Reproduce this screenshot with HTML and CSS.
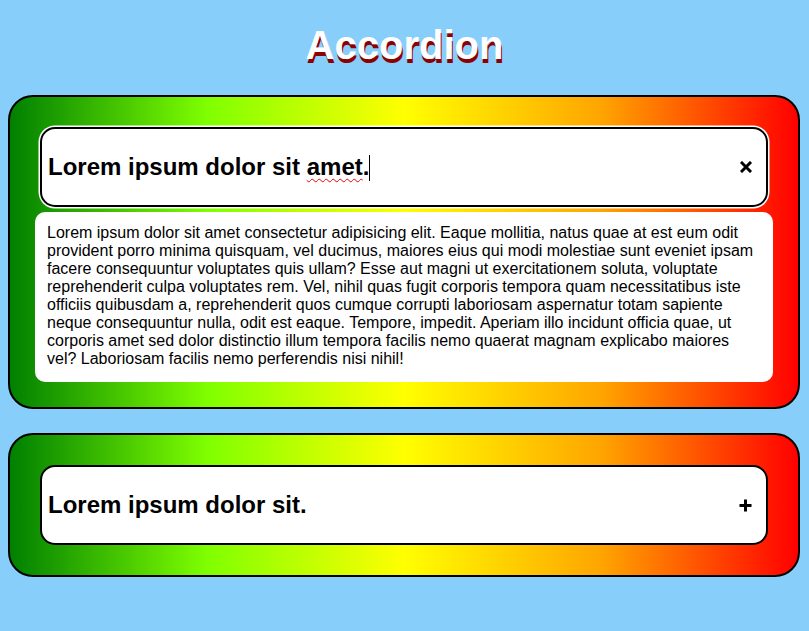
FILE: index.html
```html
<!DOCTYPE html>
<html lang="en">
<head>
<meta charset="utf-8">
<title>Accordion</title>
<link rel="stylesheet" href="styles.css">
</head>
<body>
<h1 class="title">Accordion</h1>
<div class="panel">
  <div class="head head--focus">
    <span class="head-text">Lorem ipsum dolor sit <span class="misspelt">amet</span>.<span class="caret"></span></span>
    <svg class="icon" width="12" height="12" viewBox="0 0 12 12"><path d="M2 2 L10 10 M10 2 L2 10" stroke="#000" stroke-width="3" stroke-linecap="square"/></svg>
  </div>
  <div class="body">
    <p>Lorem ipsum dolor sit amet consectetur adipisicing elit. Eaque mollitia, natus quae at est eum odit provident porro minima quisquam, vel ducimus, maiores eius qui modi molestiae sunt eveniet ipsam facere consequuntur voluptates quis ullam? Esse aut magni ut exercitationem soluta, voluptate reprehenderit culpa voluptates rem. Vel, nihil quas fugit corporis tempora quam necessitatibus iste officiis quibusdam a, reprehenderit quos cumque corrupti laboriosam aspernatur totam sapiente neque consequuntur nulla, odit est eaque. Tempore, impedit. Aperiam illo incidunt officia quae, ut corporis amet sed dolor distinctio illum tempora facilis nemo quaerat magnam explicabo maiores vel? Laboriosam facilis nemo perferendis nisi nihil!</p>
  </div>
</div>
<div class="panel">
  <div class="head">
    <span class="head-text">Lorem ipsum dolor sit.</span>
    <svg class="icon" width="13" height="13" viewBox="0 0 13 13"><path d="M6.5 0.5 V12.5 M0.5 6.5 H12.5" stroke="#000" stroke-width="3"/></svg>
  </div>
</div>
</body>
</html>
```

FILE: styles.css
```css
html, body {
  background: #87cefa;
}
body {
  margin: 8px;
  font-family: "Liberation Sans", Arial, sans-serif;
}
.title {
  margin: 14px 0 27px;
  font-size: 40px;
  line-height: 46px;
  font-weight: bold;
  text-align: center;
  color: #fff;
  text-shadow: 1px 4px 0 #8b0000;
}
.panel {
  box-sizing: border-box;
  width: 792px;
  margin-bottom: 24px;
  padding: 25px;
  border: 2px solid #000;
  border-radius: 25px;
  background: linear-gradient(to right, #008000, #7fff00, #ffff00, #ffa500, #ff0000);
}
.head {
  box-sizing: border-box;
  height: 80px;
  margin: 5px;
  padding: 0 14px 0 6px;
  display: flex;
  align-items: center;
  justify-content: space-between;
  background: #fff;
  border: 2px solid #000;
  border-radius: 15px;
}
.head--focus {
  box-shadow: 0 0 0 1.5px #fff;
}
.head-text {
  font-size: 24px;
  font-weight: bold;
  color: #000;
  line-height: 28px;
}
.misspelt {
  text-decoration: underline wavy #e00;
  text-decoration-thickness: 1px;
  text-underline-offset: 3px;
}
.caret {
  display: inline-block;
  width: 0;
  height: 26px;
  border-left: 1px solid #000;
  vertical-align: -6px;
}
.icon {
  display: block;
}
.body {
  background: #fff;
  border-radius: 10px;
  padding: 12px 12px 14px;
}
.body p {
  margin: 0;
  font-size: 16px;
  line-height: 18px;
  color: #000;
}
```
